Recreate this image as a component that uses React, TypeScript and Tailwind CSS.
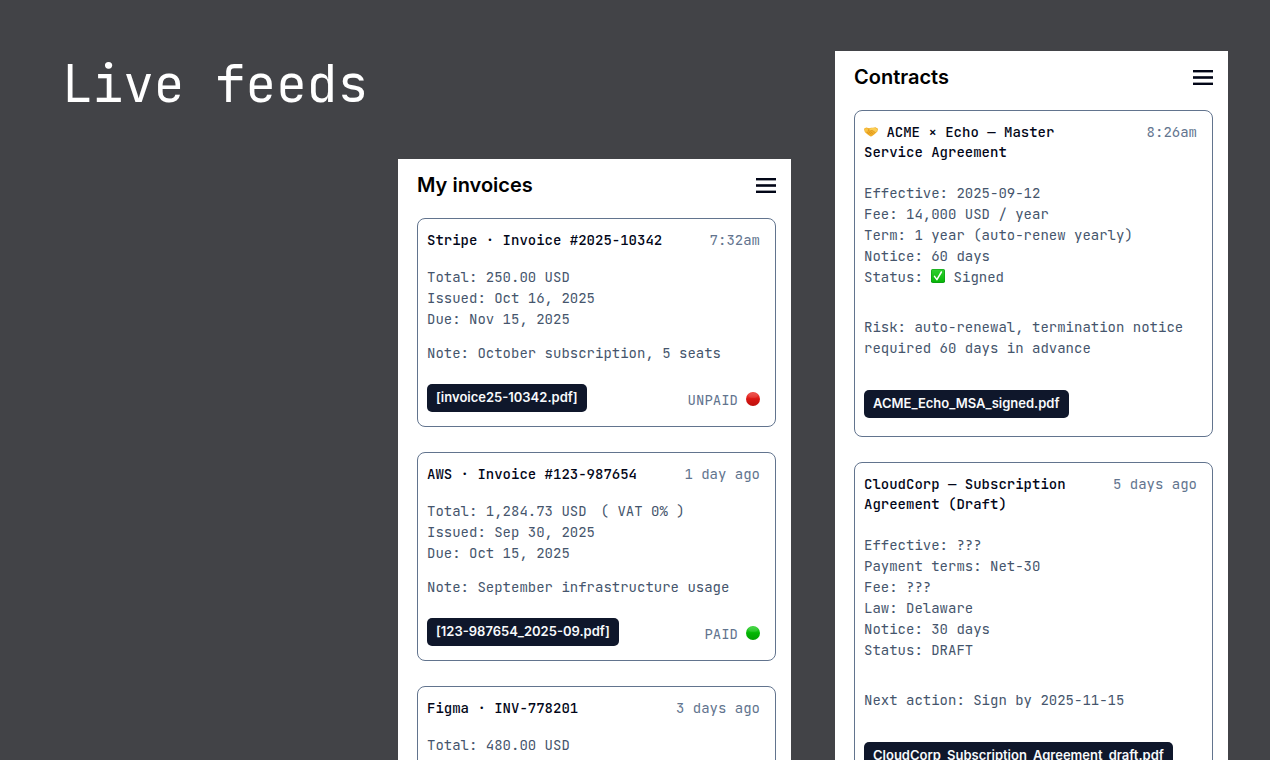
import React from "react";

type Invoice = {
  title: string;
  time: string;
  total: string;
  vat?: string;
  lines?: string[];
  note?: string;
  file?: string;
  status?: "PAID" | "UNPAID";
};

const invoices: Invoice[] = [
  {
    title: "Stripe · Invoice #2025-10342",
    time: "7:32am",
    total: "Total: 250.00 USD",
    lines: ["Issued: Oct 16, 2025", "Due: Nov 15, 2025"],
    note: "Note: October subscription, 5 seats",
    file: "[invoice25-10342.pdf]",
    status: "UNPAID",
  },
  {
    title: "AWS · Invoice #123-987654",
    time: "1 day ago",
    total: "Total: 1,284.73 USD",
    vat: "( VAT 0% )",
    lines: ["Issued: Sep 30, 2025", "Due: Oct 15, 2025"],
    note: "Note: September infrastructure usage",
    file: "[123-987654_2025-09.pdf]",
    status: "PAID",
  },
  {
    title: "Figma · INV-778201",
    time: "3 days ago",
    total: "Total: 480.00 USD",
  },
];

function Menu() {
  return (
    <button type="button" aria-label="Menu">
      <svg width="20" height="15" viewBox="0 0 20 15" fill="#020617" className="block">
        <rect width="20" height="2.4" />
        <rect y="6.2" width="20" height="2.6" />
        <rect y="12.6" width="20" height="2.4" />
      </svg>
    </button>
  );
}

function Dot({ paid }: { paid: boolean }) {
  const id = paid ? "dot-paid" : "dot-unpaid";
  return (
    <svg width="14" height="14" viewBox="0 0 14 14" className="mb-1.5 block self-end">
      <defs>
        <linearGradient id={id} x1="0" y1="0" x2="0" y2="1">
          <stop offset="0" stopColor={paid ? "#3fd43f" : "#ec4a44"} />
          <stop offset="0.4" stopColor={paid ? "#0fc10f" : "#e3201b"} />
          <stop offset="0.5" stopColor={paid ? "#04b504" : "#d81612"} />
          <stop offset="1" stopColor={paid ? "#02a002" : "#bd100e"} />
        </linearGradient>
      </defs>
      <circle cx="7" cy="7" r="7" fill={"url(#" + id + ")"} />
      <ellipse cx="7" cy="3.4" rx="4.8" ry="2.4" fill="#fff" opacity="0.1" />
    </svg>
  );
}

function Handshake() {
  return (
    <svg width="14" height="14" viewBox="0 0 14 14" className="inline-block align-[-2px]">
      <path d="M0 3.8 2.2 2.5l2.9.8 2-.5 1.9-.1 2.4-.4L14 3.8l-.6 2.7-1.5 1.5-2 1.7-2.1 1.6-1.2.1-1.6-.9-2-1.6L.8 7Z" fill="#f0ae2a" />
      <path d="m5.2 3.7 2.6-.6 3.5-.2 1.9 1-.5 2.5-1.3 1-3-1.9-1.8-.2L5 6Z" fill="#fbcd52" />
      <path d="M.3 4.1 2.4 3.3l2 .6L3.2 6.5l-1.8.6Z" fill="#f8c245" />
      <path d="M5.2 3.9 4.7 5.8l1.6.3 1.8-.8 3.4 2.2M3 7.2l2.4 2M4.9 7l2.4 2.1M6.8 7l2.1 1.7" fill="none" stroke="#cf8514" strokeWidth="0.5" />
    </svg>
  );
}

function Check() {
  return (
    <svg width="14" height="14" viewBox="0 0 14 14" className="inline-block align-[-1px]">
      <defs>
        <linearGradient id="check-bg" x1="0" y1="0" x2="0" y2="1">
          <stop offset="0" stopColor="#2fd02f" />
          <stop offset="1" stopColor="#08b608" />
        </linearGradient>
      </defs>
      <rect width="14" height="14" rx="1.8" fill="#0b9a14" />
      <rect x="0.6" y="0.6" width="12.8" height="12.6" rx="1.4" fill="url(#check-bg)" />
      <path d="m3.5 7.4 2.4 3.2 4.5-7.6" fill="none" stroke="#fff" strokeWidth="1.5" strokeLinecap="round" strokeLinejoin="round" />
    </svg>
  );
}

function FileButton({ name }: { name: string }) {
  return (
    <button
      type="button"
      className="h-7 rounded-[5px] bg-slate-900 px-[9px] pb-0.5 font-['Inter',sans-serif] text-[13px] leading-[26px] font-semibold whitespace-nowrap text-slate-50"
    >
      {name}
    </button>
  );
}

function CardHead({ title, time }: { title: React.ReactNode; time: string }) {
  return (
    <div className="flex items-start justify-between leading-5">
      <h3 className="max-w-[250px] font-medium text-slate-950">{title}</h3>
      <time className="shrink-0 text-slate-500">{time}</time>
    </div>
  );
}

function Feed({ title, className, children }: { title: string; className: string; children: React.ReactNode }) {
  return (
    <section className={"w-[393px] shrink-0 bg-white pr-[15px] pl-[19px] " + className}>
      <header className="mb-1.5 flex h-[53px] items-center justify-between">
        <h2 className="pb-0.5 font-['Inter',sans-serif] text-xl font-semibold text-black">{title}</h2>
        <Menu />
      </header>
      <div className="flex flex-col gap-[25px]">{children}</div>
    </section>
  );
}

function InvoiceCard({ invoice }: { invoice: Invoice }) {
  return (
    <article className="rounded-lg border border-slate-500 pt-[11px] pr-[15px] pb-3.5 pl-[9px]">
      <CardHead title={invoice.title} time={invoice.time} />
      <div className="mt-[17px]">
        <p>
          {invoice.total}
          {invoice.vat && <span className="ml-3.5">{invoice.vat}</span>}
        </p>
        {invoice.lines?.map((line) => <p key={line}>{line}</p>)}
      </div>
      {invoice.note && <p className="mt-[13px]">{invoice.note}</p>}
      {invoice.file && (
        <div className="mt-5 flex items-end justify-between">
          <FileButton name={invoice.file} />
          <div className="flex gap-2 leading-6 text-slate-500">
            {invoice.status}
            <Dot paid={invoice.status === "PAID"} />
          </div>
        </div>
      )}
    </article>
  );
}

function ContractCard({
  title,
  time,
  lines,
  note,
  file,
}: {
  title: React.ReactNode;
  time: string;
  lines: React.ReactNode[];
  note: string;
  file: string;
}) {
  return (
    <article className="rounded-lg border border-slate-500 pt-[11px] pr-[15px] pb-[18px] pl-[9px]">
      <CardHead title={title} time={time} />
      <div className="mt-[21px]">
        {lines.map((line, i) => (
          <p key={i}>{line}</p>
        ))}
      </div>
      <p className="mt-[29px] mb-[31px]">{note}</p>
      <div className="flex">
        <FileButton name={file} />
      </div>
    </article>
  );
}

export default function App() {
  return (
    <main className="flex h-screen gap-11 overflow-hidden bg-[#424347] pr-[42px] pl-[62px] font-['JetBrains_Mono','DejaVu_Sans_Mono',monospace] text-sm leading-[21px] text-slate-600">
      <h1 className="w-0 flex-1 pt-[52px] text-[51px] leading-[64px] whitespace-nowrap text-white">Live feeds</h1>

      <Feed title="My invoices" className="mt-[159px]">
        {invoices.map((invoice) => (
          <InvoiceCard key={invoice.title} invoice={invoice} />
        ))}
      </Feed>

      <Feed title="Contracts" className="mt-[51px]">
        <ContractCard
          title={
            <>
              <Handshake /> ACME × Echo — Master Service Agreement
            </>
          }
          time="8:26am"
          lines={[
            "Effective: 2025-09-12",
            "Fee: 14,000 USD / year",
            "Term: 1 year (auto-renew yearly)",
            "Notice: 60 days",
            <>
              Status: <Check /> Signed
            </>,
          ]}
          note="Risk: auto-renewal, termination notice required 60 days in advance"
          file="ACME_Echo_MSA_signed.pdf"
        />
        <ContractCard
          title="CloudCorp — Subscription Agreement (Draft)"
          time="5 days ago"
          lines={[
            "Effective: ???",
            "Payment terms: Net-30",
            "Fee: ???",
            "Law: Delaware",
            "Notice: 30 days",
            "Status: DRAFT",
          ]}
          note="Next action: Sign by 2025-11-15"
          file="CloudCorp_Subscription_Agreement_draft.pdf"
        />
      </Feed>
    </main>
  );
}
